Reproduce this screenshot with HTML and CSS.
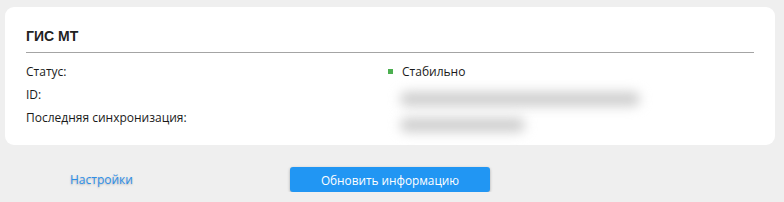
FILE: index.html
```html
<!DOCTYPE html>
<html lang="ru">
<head>
<meta charset="utf-8">
<link rel="stylesheet" href="styles.css">
</head>
<body>
<div class="card">
  <div class="title">ГИС МТ</div>
  <div class="rows">
    <div class="label">Статус:</div>
    <div class="value"><span class="dot"></span>Стабильно</div>
    <div class="label">ID:</div>
    <div class="value"><span class="blur blur-long"></span></div>
    <div class="label">Последняя синхронизация:</div>
    <div class="value"><span class="blur blur-short"></span></div>
  </div>
</div>
<div class="actions">
  <a class="link" href="#">Настройки</a>
  <button class="btn">Обновить информацию</button>
</div>
</body>
</html>
```
FILE: styles.css
```css
html, body {
  margin: 0;
  padding: 0;
  background: #efefef;
  font-family: "Open Sans", "Noto Sans", sans-serif;
  color: #1a1a1a;
}
.card {
  margin: 7px 9px 0 5px;
  background: #fff;
  border-radius: 9px;
  padding: 19px 21px 16px;
}
.title {
  font-family: "Liberation Sans", Arial, sans-serif;
  font-weight: bold;
  font-size: 14px;
  line-height: 20px;
  color: #222;
  padding-bottom: 6px;
  border-bottom: 1px solid #a4a4a4;
}
.rows {
  display: grid;
  grid-template-columns: 362px 1fr;
  grid-auto-rows: 23px;
  padding-top: 7px;
  font-size: 12px;
  line-height: 23px;
}
.value {
  display: flex;
  align-items: center;
}
.dot {
  width: 5px;
  height: 5px;
  background: #4caf50;
  margin-right: 9px;
}
.blur {
  display: block;
  height: 14px;
  margin-left: 12px;
  background: #cdcdcd;
  border-radius: 7px;
  filter: blur(6px);
}
.blur-long { width: 240px; margin-top: 8px; }
.blur-short { width: 125px; margin-top: 14px; }
.actions {
  display: flex;
  align-items: center;
  padding: 22px 0 0 70px;
}
.link {
  width: 220px;
  font-size: 12px;
  color: #2e8fe8;
  text-decoration: none;
  text-shadow: 0 1px 2px rgba(0,0,0,0.25);
}
.btn {
  width: 200px;
  height: 25px;
  border: none;
  border-radius: 3px;
  background: #2196f3;
  color: #fff;
  font-family: "Open Sans", "Noto Sans", sans-serif;
  font-size: 11.8px;
  box-shadow: 0 1px 3px rgba(0,0,0,0.3);
  padding: 0;
}
```
